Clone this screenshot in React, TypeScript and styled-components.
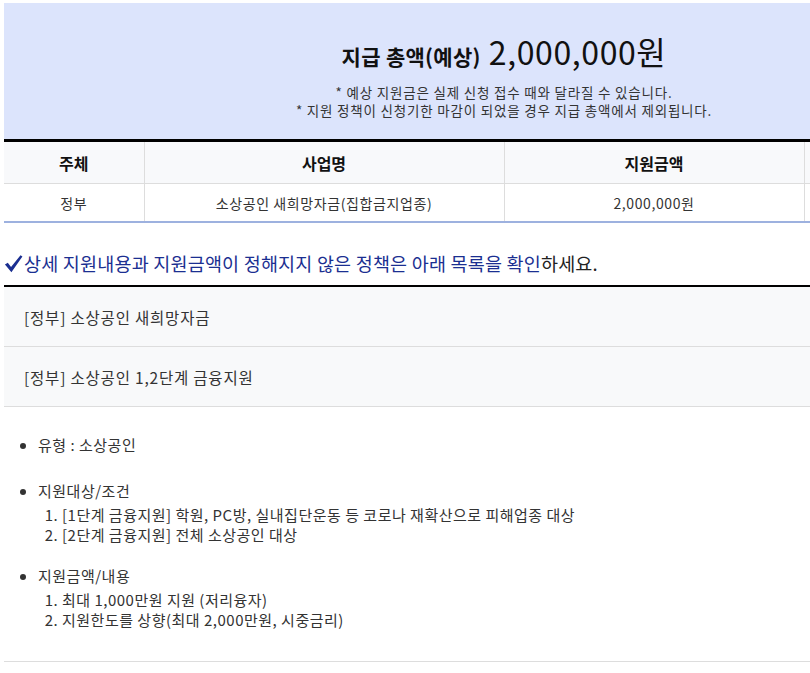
import { createGlobalStyle, styled } from "styled-components";

const GlobalStyle = createGlobalStyle`
  html, body {
    margin: 0;
    padding: 0;
    overflow: hidden;
    background: #ffffff;
  }
  body {
    padding: 3px 0 0 4px;
    font-family: "Noto Sans CJK KR", "Noto Sans", sans-serif;
    color: #333;
  }
`;

const rows = [{ who: "정부", name: "소상공인 새희망자금(집합금지업종)", amount: "2,000,000원" }];

const App = () => {
  return (
    <Page>
      <GlobalStyle />
      <Summary>
        <Total>
          <b>지급 총액(예상)</b>
          <Amount>2,000,000원</Amount>
        </Total>
        <Note>* 예상 지원금은 실제 신청 접수 때와 달라질 수 있습니다.</Note>
        <Note>* 지원 정책이 신청기한 마감이 되었을 경우 지급 총액에서 제외됩니다.</Note>
      </Summary>

      <Table>
        <colgroup>
          <col style={{ width: 140 }} />
          <col style={{ width: 360 }} />
          <col style={{ width: 300 }} />
          <col style={{ width: 200 }} />
        </colgroup>
        <thead>
          <tr>
            <Th>주체</Th>
            <Th>사업명</Th>
            <Th>지원금액</Th>
            <Th></Th>
          </tr>
        </thead>
        <tbody>
          {rows.map((r) => (
            <tr key={r.name}>
              <Td>{r.who}</Td>
              <Td>{r.name}</Td>
              <Td>{r.amount}</Td>
              <Td></Td>
            </tr>
          ))}
        </tbody>
      </Table>

      <Heading>
        <Check viewBox="0 0 20 20">
          <path d="M1 11 L4 9.2 L7.4 13.8 L17.4 1.2 L19.4 2.6 L7.8 19.2 Z" fill="#1b2f91" />
        </Check>
        <Blue>상세 지원내용과 지원금액이 정해지지 않은 정책은 아래 목록을 확인</Blue>하세요.
      </Heading>

      <Accordion>
        <Item>[정부] 소상공인 새희망자금</Item>
        <Item>[정부] 소상공인 1,2단계 금융지원</Item>
        <Detail>
          <Bullets>
            <Section $after={26}>유형 : 소상공인</Section>
            <Section $after={21}>
              지원대상/조건
              <Numbered>
                <li>[1단계 금융지원] 학원, PC방, 실내집단운동 등 코로나 재확산으로 피해업종 대상</li>
                <li>[2단계 금융지원] 전체 소상공인 대상</li>
              </Numbered>
            </Section>
            <Section $after={0}>
              지원금액/내용
              <Numbered>
                <li>최대 1,000만원 지원 (저리융자)</li>
                <li>지원한도를 상향(최대 2,000만원, 시중금리)</li>
              </Numbered>
            </Section>
          </Bullets>
        </Detail>
      </Accordion>
    </Page>
  );
};

export default App;

const Page = styled.div`
  width: 1000px;
`;

const Summary = styled.div`
  height: 136px;
  box-sizing: border-box;
  background: #dce4fc;
  padding-top: 32px;
  text-align: center;
`;

const Total = styled.div`
  height: 32px;
  display: flex;
  justify-content: center;
  align-items: baseline;
  gap: 8px;
  color: #111;
  margin-bottom: 16px;
  line-height: 1;
  b {
    font-size: 21px;
    font-weight: 700;
    letter-spacing: 0.3px;
  }
`;

const Amount = styled.span`
  font-size: 32px;
  font-weight: 400;
  letter-spacing: 0.6px;
`;

const Note = styled.div`
  font-size: 13.5px;
  line-height: 18px;
  letter-spacing: 0.8px;
  color: #333;
`;

const Table = styled.table`
  width: 1000px;
  border-collapse: collapse;
  table-layout: fixed;
  border-top: 3px solid #000;
  border-bottom: 2px solid #9db1df;
`;

const Th = styled.th`
  height: 41px;
  background: #f8f9fb;
  font-size: 16px;
  font-weight: 700;
  color: #111;
  border-left: 1px solid #dddddd;
  border-bottom: 1px solid #dddddd;
  padding: 0;
  &:first-child {
    border-left: none;
  }
`;

const Td = styled.td`
  height: 37px;
  text-align: center;
  font-size: 14px;
  letter-spacing: 0.6px;
  color: #333;
  border-left: 1px solid #dddddd;
  padding: 0;
  &:first-child {
    border-left: none;
  }
`;

const Heading = styled.h3`
  margin: 0;
  padding: 22px 0 4px;
  height: 36px;
  display: flex;
  align-items: center;
  font-size: 18.5px;
  font-weight: 400;
  letter-spacing: 0.2px;
  color: #222;
  white-space: nowrap;
`;

const Check = styled.svg`
  width: 19px;
  height: 19px;
  margin-right: 1px;
`;

const Blue = styled.span`
  color: #1b2f91;
`;

const Accordion = styled.div`
  border-top: 2px solid #000;
`;

const Item = styled.div`
  height: 60px;
  box-sizing: border-box;
  display: flex;
  align-items: center;
  padding-left: 20px;
  background: #f8f9fa;
  border-bottom: 1px solid #dddddd;
  font-size: 15.5px;
  letter-spacing: 0.8px;
  color: #333;
`;

const Detail = styled.div`
  padding: 28px 0 31px;
  border-bottom: 1px solid #dddddd;
`;

const Bullets = styled.ul`
  margin: 0;
  padding-left: 34px;
  list-style: disc;
`;

const Section = styled.li<{ $after: number }>`
  font-size: 15px;
  line-height: 20px;
  letter-spacing: 0.5px;
  color: #333;
  margin-bottom: ${(p) => p.$after}px;
`;

const Numbered = styled.ol`
  margin: 4px 0 0;
  padding-left: 24px;
  li {
    line-height: 20px;
    height: 20px;
  }
`;
